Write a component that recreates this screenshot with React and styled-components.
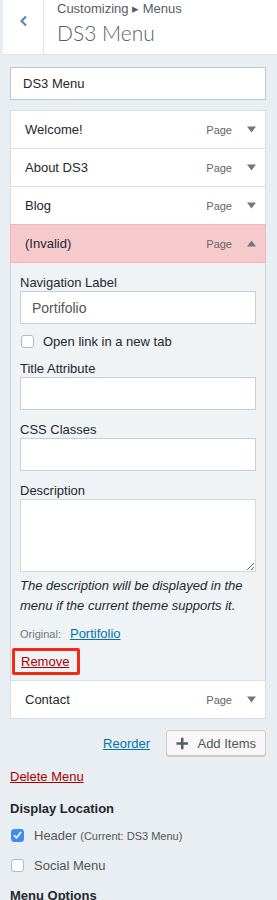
import React from "react";
import styled, { createGlobalStyle } from "styled-components";

const GlobalStyle = createGlobalStyle`
  body {
    margin: 0;
    background: #e9eef2;
    font-family: "Liberation Sans", Arial, sans-serif;
    color: #23282d;
    font-size: 13px;
  }
`;

const items = [
  { title: "Welcome!", type: "Page" },
  { title: "About DS3", type: "Page" },
  { title: "Blog", type: "Page" },
];

const Caret = ({ up }) => (
  <svg width="9" height="7" viewBox="0 0 9 7">
    <polygon
      points={up ? "0,6.5 4.5,0.5 9,6.5" : "0,0.5 9,0.5 4.5,6.5"}
      fill="#72777c"
    />
  </svg>
);

export default function App() {
  return (
    <>
      <GlobalStyle />
      <Header>
        <BackButton>
          <svg width="9" height="12" viewBox="0 0 9 12">
            <path
              d="M7 1.5 L2.5 6 L7 10.5"
              fill="none"
              stroke="#5b8ab5"
              strokeWidth="2.2"
            />
          </svg>
        </BackButton>
        <TitleBlock>
          <Crumb>Customizing ▸ Menus</Crumb>
          <Title>DS3 Menu</Title>
        </TitleBlock>
      </Header>

      <Content>
        <NameInput defaultValue="DS3 Menu" />

        <List>
          {items.map((item) => (
            <ItemRow key={item.title}>
              <ItemTitle>{item.title}</ItemTitle>
              <ItemType>{item.type}</ItemType>
              <Caret />
            </ItemRow>
          ))}
          <ItemRow invalid>
            <ItemTitle>(Invalid)</ItemTitle>
            <ItemType>Page</ItemType>
            <Caret up />
          </ItemRow>

          <Settings>
            <Field>
              <Label>Navigation Label</Label>
              <TextInput defaultValue="Portifolio" />
            </Field>
            <CheckRow>
              <Box />
              <span>Open link in a new tab</span>
            </CheckRow>
            <Field>
              <Label>Title Attribute</Label>
              <TextInput />
            </Field>
            <Field>
              <Label>CSS Classes</Label>
              <TextInput />
            </Field>
            <Field tight>
              <Label>Description</Label>
              <TextArea />
            </Field>
            <Hint>
              The description will be displayed in the menu if the current
              theme supports it.
            </Hint>
            <Original>
              Original:<BlueLink>Portifolio</BlueLink>
            </Original>
            <RemoveBox>
              <RedLink>Remove</RedLink>
            </RemoveBox>
          </Settings>

          <ItemRow>
            <ItemTitle>Contact</ItemTitle>
            <ItemType>Page</ItemType>
            <Caret />
          </ItemRow>
        </List>

        <Actions>
          <BlueLink>Reorder</BlueLink>
          <AddButton>
            <svg width="13" height="13" viewBox="0 0 13 13">
              <path d="M6.5 0.5 V12.5 M0.5 6.5 H12.5" stroke="#555d66" strokeWidth="2.6" />
            </svg>
            Add Items
          </AddButton>
        </Actions>

        <DeleteRow>
          <RedLink>Delete Menu</RedLink>
        </DeleteRow>

        <SectionTitle>Display Location</SectionTitle>
        <LocationRow>
          <Box checked>
            <svg width="9" height="8" viewBox="0 0 9 8">
              <path d="M1 4.2 L3.5 6.8 L8 1" fill="none" stroke="#fff" strokeWidth="1.6" />
            </svg>
          </Box>
          <span>
            Header <Small>(Current: DS3 Menu)</Small>
          </span>
        </LocationRow>
        <LocationRow>
          <Box />
          <span>Social Menu</span>
        </LocationRow>
        <SectionTitle last>Menu Options</SectionTitle>
      </Content>
    </>
  );
}

const Header = styled.div`
  display: flex;
  height: 54px;
  margin-left: 3px;
  background: #fff;
  border-bottom: 1px solid #dde3e8;
`;

const BackButton = styled.div`
  width: 41px;
  display: flex;
  justify-content: center;
  padding-top: 15px;
  box-sizing: border-box;
  border-right: 1px solid #dde3e8;
`;

const TitleBlock = styled.div`
  display: flex;
  flex-direction: column;
  padding: 1px 0 0 13px;
`;

const Crumb = styled.div`
  font-size: 13px;
  line-height: 16px;
  color: #555d66;
`;

const Title = styled.div`
  font-family: Lato, "Liberation Sans", sans-serif;
  font-size: 21px;
  font-weight: 300;
  line-height: 31px;
  color: #555d66;
`;

const Content = styled.div`
  padding: 12px 11px 0 10px;
`;

const NameInput = styled.input`
  display: block;
  width: 100%;
  box-sizing: border-box;
  height: 33px;
  padding: 0 12px;
  border: 1px solid #b8c8d6;
  background: #fff;
  font: 13px "Liberation Sans", Arial, sans-serif;
  color: #23282d;
`;

const List = styled.div`
  margin-top: 10px;
  display: flex;
  flex-direction: column;
`;

const ItemRow = styled.div`
  display: flex;
  align-items: center;
  height: 39px;
  box-sizing: border-box;
  padding: 0 9px 0 14px;
  margin-top: -1px;
  border: 1px solid ${({ invalid }) => (invalid ? "#f1b6ba" : "#d5dfe8")};
  background: ${({ invalid }) => (invalid ? "#f6c9cc" : "#fff")};
  &:first-child {
    margin-top: 0;
  }
`;

const ItemTitle = styled.div`
  flex: 1;
  font-size: 13px;
  color: #23282d;
`;

const ItemType = styled.div`
  font-size: 11px;
  color: #666;
  margin-right: 15px;
`;

const Settings = styled.div`
  display: flex;
  flex-direction: column;
  padding: 12px 9px 5px;
  background: #f0f3f6;
  border: 1px solid #c9d6e2;
  border-top: none;
`;

const Field = styled.div`
  display: flex;
  flex-direction: column;
  margin-bottom: ${({ tight }) => (tight ? "4px" : "12px")};
`;

const Label = styled.div`
  font-size: 13px;
  line-height: 16px;
  color: #23282d;
`;

const TextInput = styled.input`
  box-sizing: border-box;
  height: 33px;
  padding: 0 11px;
  border: 1px solid #c3cfdb;
  background: #fff;
  font: 14px "Liberation Sans", Arial, sans-serif;
  color: #555;
`;

const TextArea = styled.textarea`
  box-sizing: border-box;
  height: 73px;
  border: 1px solid #d6d9dc;
  background: #fff;
  resize: vertical;
`;

const CheckRow = styled.label`
  display: flex;
  align-items: center;
  gap: 9px;
  height: 13px;
  font-size: 13px;
  margin: -1px 0 13px 1px;
`;

const Box = styled.span`
  width: 13px;
  height: 13px;
  flex-shrink: 0;
  box-sizing: border-box;
  border-radius: 3px;
  display: flex;
  align-items: center;
  justify-content: center;
  border: 1px solid ${({ checked }) => (checked ? "#3d8ef0" : "#b4b9be")};
  background: ${({ checked }) => (checked ? "#3d8ef0" : "#fff")};
`;

const Hint = styled.div`
  font-style: italic;
  font-size: 13px;
  line-height: 20px;
  color: #23282d;
`;

const Original = styled.div`
  display: flex;
  align-items: baseline;
  gap: 9px;
  margin-top: 10px;
  line-height: 16px;
  font-size: 11px;
  color: #72777c;
`;

const BlueLink = styled.a`
  color: #0073aa;
  text-decoration: underline;
  font-size: 13px;
`;

const RemoveBox = styled.div`
  align-self: flex-start;
  margin: 6px 0 0 -8px;
  height: 27px;
  box-sizing: border-box;
  display: flex;
  align-items: center;
  padding: 0 8px 0 6px;
  border: 3px solid #f42a14;
  border-radius: 2px;
`;

const RedLink = styled.a`
  color: #a00;
  text-decoration: underline;
  font-size: 13px;
  line-height: 16px;
`;

const Actions = styled.div`
  display: flex;
  align-items: center;
  justify-content: flex-end;
  gap: 16px;
  margin-top: 11px;
`;

const AddButton = styled.button`
  display: flex;
  align-items: center;
  gap: 9px;
  width: 100px;
  height: 26px;
  padding: 0 9px;
  box-sizing: border-box;
  white-space: nowrap;
  border: 1px solid #ccc;
  border-radius: 3px;
  background: #f7f7f7;
  box-shadow: 0 1px 0 #ccc;
  font: 13px "Liberation Sans", Arial, sans-serif;
  color: #555;
`;

const DeleteRow = styled.div`
  margin-top: 13px;
  line-height: 16px;
`;

const SectionTitle = styled.div`
  font-size: 13px;
  font-weight: 700;
  line-height: 18px;
  margin-top: ${({ last }) => (last ? "13px" : "15px")};
  margin-bottom: 8px;
  color: #23282d;
`;

const LocationRow = styled.label`
  display: flex;
  align-items: center;
  gap: 10px;
  height: 18px;
  font-size: 13px;
  color: #555;
  margin: 0 0 12px 1px;
  &:last-of-type {
    margin-bottom: 0;
  }
`;

const Small = styled.span`
  font-size: 11px;
`;
